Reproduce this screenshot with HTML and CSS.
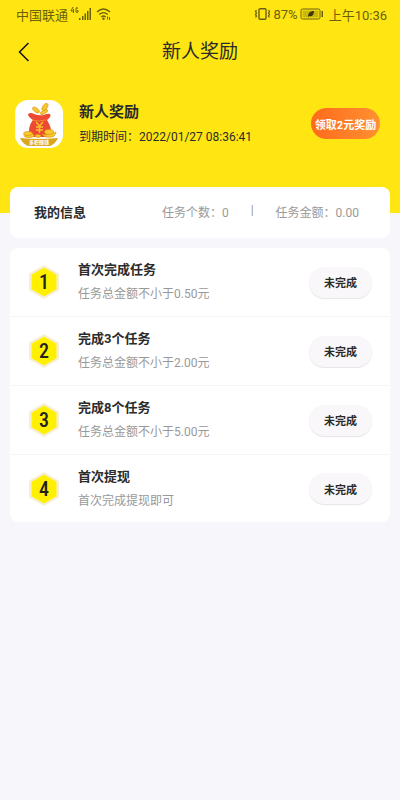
FILE: index.html
```
<!DOCTYPE html>
<html lang="zh-CN">
<head>
<meta charset="utf-8">
<meta name="viewport" content="width=device-width, initial-scale=1">
<title>新人奖励</title>
<link rel="stylesheet" href="styles.css">
</head>
<body>
<div class="status">
  <div class="status-side">
    <span>中国联通</span>
    <svg width="22" height="16" viewBox="0 0 22 16" aria-hidden="true">
      <g fill="none" stroke="currentColor" stroke-width="1"><path d="M3 1 1 5h3M3.500 3v4M8 2.500Q7 1 6 2v4q1 1 2 0V4.500H7"/></g>
      <path fill="currentColor" d="M9 12h1.500v2H9zM12 10h1.500v4H12zM14.500 7.500H16V14h-1.500zM17 5h1.500v9H17zM19.500 2H21v12h-1.500z"/>
    </svg>
    <svg class="wifi" width="16" height="14" viewBox="0 0 16 14" aria-hidden="true">
      <g fill="none" stroke="currentColor" stroke-width="1.300"><path d="M1 5Q7.500-1 14 5M3.200 7.600q4.300-4 8.600 0M5.300 10q2.200-2 4.400 0"/></g>
      <circle cx="7.500" cy="11.800" r="1.200" fill="currentColor"/><path d="M11.500 9.500v3M13.500 13v-3" stroke="currentColor" stroke-width="1"/>
    </svg>
  </div>
  <div class="status-side">
    <svg width="17" height="14" viewBox="0 0 17 14" aria-hidden="true">
      <rect x="5" y="1.700" width="7" height="10.600" rx="1" fill="none" stroke="currentColor" stroke-width="1.400"/>
      <path d="m2.500 3-1 1.500 1 1.500-1 1.500 1 1.500-1 1.500M14.500 3l1 1.500-1 1.500 1 1.500-1 1.500 1 1.500" fill="none" stroke="currentColor" stroke-width="1.300"/>
    </svg>
    <span>87%</span>
    <svg class="battery" width="24" height="12" viewBox="0 0 24 12" aria-hidden="true">
      <rect x="1" y="1" width="19" height="10" rx="1.500" fill="none" stroke="currentColor"/>
      <rect x="2.500" y="2.500" width="16" height="7" fill="currentColor" opacity=".35"/>
      <path d="M8 9c0-4 2-6 6-6 0 4-2 6-5 5L8 9.500z" fill="#3f3906"/><path d="M21.500 3h1.500v6h-1.500z" fill="currentColor"/>
    </svg>
    <span>上午10:36</span>
  </div>
</div>
<header class="nav">
  <button class="back" type="button" aria-label="返回">
    <svg width="12" height="20" viewBox="0 0 12 20" aria-hidden="true"><path d="M10.500 1 1.500 10l9 9" fill="none" stroke="currentColor" stroke-width="1.500"/></svg>
  </button>
  <h1>新人奖励</h1>
</header>
<main>
  <section class="profile">
    <svg class="logo" width="48" height="48" viewBox="0 0 48 48" aria-hidden="true">
      <rect width="48" height="48" rx="13" fill="#fff"/>
      <g fill="#f8c72e" stroke="#dc9a18" stroke-width=".7">
        <ellipse cx="21" cy="10" rx="4" ry="2" transform="rotate(38 21 10)"/>
        <ellipse cx="30" cy="7" rx="4" ry="2.200" transform="rotate(-55 30 7)"/>
        <ellipse cx="29" cy="12" rx="4" ry="1.800" transform="rotate(-30 29 12)"/>
      </g>
      <path d="M13 14q3-2 6 0 5 2 10 1 4-2 6-1 2 2-3 6 5 8 4 14-1 3-7 3H18q-5 0-4-6 0-6 4-11-5-3-5-6z" fill="#ec4a32"/>
      <path d="M17 20q7 2 14 0" fill="none" stroke="#f08a30" stroke-width="1"/>
      <path d="m21 22 3.500 4 3.500-4M24.500 26v7M21 27h7M21 30h7" fill="none" stroke="#fbc12c" stroke-width="1.400"/>
      <g fill="#fbc92e" stroke="#d99514" stroke-width=".7">
        <ellipse cx="14" cy="35.500" rx="5" ry="2"/><ellipse cx="13" cy="33.500" rx="4.500" ry="2"/>
        <path d="M27 34q4 2 7-1 4 2 7-1-1 5-5 5-6 1-9-3z"/><ellipse cx="34" cy="32" rx="4.500" ry="2.400"/><ellipse cx="23" cy="36" rx="3" ry="1.400"/>
      </g>
      <path d="M5 38q19 2 38 0-2 5-8 8H13q-6-3-8-8z" fill="#dda51e"/>
      <text class="logo-text" x="24" y="44" text-anchor="middle">多职赚钱</text>
    </svg>
    <div class="profile-text">
      <h2>新人奖励</h2>
      <p>到期时间：2022/01/27 08:36:41</p>
    </div>
    <button class="claim" type="button">领取2元奖励</button>
  </section>
  <section class="card info">
    <h2>我的信息</h2>
    <div class="totals"><span>任务个数：0</span><span>|</span><span>任务金额：0.00</span></div>
  </section>
  <ul class="card tasks">
    <li>
      <svg class="badge" width="32" height="36" viewBox="0 0 32 36" aria-hidden="true"><path class="hex-edge" d="m16 2 14 8v16l-14 8-14-8V10z"/><path class="hex" d="m16 3.500 12.500 7.200v14.600L16 32.500 3.500 25.300V10.700z"/><text x="16" y="25" text-anchor="middle">1</text></svg>
      <div class="task-text"><h3>首次完成任务</h3><p>任务总金额不小于0.50元</p></div>
      <button class="state" type="button">未完成</button>
    </li>
    <li>
      <svg class="badge" width="32" height="36" viewBox="0 0 32 36" aria-hidden="true"><path class="hex-edge" d="m16 2 14 8v16l-14 8-14-8V10z"/><path class="hex" d="m16 3.500 12.500 7.200v14.600L16 32.500 3.500 25.300V10.700z"/><text x="16" y="25" text-anchor="middle">2</text></svg>
      <div class="task-text"><h3>完成3个任务</h3><p>任务总金额不小于2.00元</p></div>
      <button class="state" type="button">未完成</button>
    </li>
    <li>
      <svg class="badge" width="32" height="36" viewBox="0 0 32 36" aria-hidden="true"><path class="hex-edge" d="m16 2 14 8v16l-14 8-14-8V10z"/><path class="hex" d="m16 3.500 12.500 7.200v14.600L16 32.500 3.500 25.300V10.700z"/><text x="16" y="25" text-anchor="middle">3</text></svg>
      <div class="task-text"><h3>完成8个任务</h3><p>任务总金额不小于5.00元</p></div>
      <button class="state" type="button">未完成</button>
    </li>
    <li>
      <svg class="badge" width="32" height="36" viewBox="0 0 32 36" aria-hidden="true"><path class="hex-edge" d="m16 2 14 8v16l-14 8-14-8V10z"/><path class="hex" d="m16 3.500 12.500 7.200v14.600L16 32.500 3.500 25.300V10.700z"/><text x="16" y="25" text-anchor="middle">4</text></svg>
      <div class="task-text"><h3>首次提现</h3><p>首次完成提现即可</p></div>
      <button class="state" type="button">未完成</button>
    </li>
  </ul>
</main>
</body>
</html>
```
FILE: styles.css
```
* { box-sizing: border-box; }
body {
  margin: 0;
  min-height: 100vh;
  background: linear-gradient(#ffe612, #ffe612) top / 100% 213px no-repeat #f7f7fb;
  color: #2b2b2b;
  font-family: Roboto, "Noto Sans CJK SC", sans-serif;
  font-size: 12px;
}
h1, h2, h3, p, ul { margin: 0; padding: 0; }
button { border: 0; padding: 0; font-family: inherit; color: inherit; }
svg { display: block; flex: none; }

.status {
  display: flex;
  justify-content: space-between;
  align-items: center;
  height: 28px;
  padding: 0 13px 0 16px;
  color: #6b600c;
  font-size: 13px;
}
.status-side { display: flex; align-items: center; gap: 2px; }
.wifi { margin-left: 2px; }
.battery { margin-right: 3px; }

.nav {
  display: grid;
  grid-template-columns: 40px 1fr 40px;
  align-items: center;
  height: 48px;
}
.back {
  display: flex;
  padding-left: 18px;
  background: none;
  color: #111;
}
.nav h1 {
  font-size: 19px;
  font-weight: 400;
  line-height: 28px;
  text-align: center;
}

.profile {
  display: flex;
  align-items: center;
  gap: 16px;
  padding: 22px 20px 38px 15px;
}
.logo-text { font-size: 5px; font-weight: 700; fill: #fff; }
.profile-text { flex: 1; padding-top: 2px; }
.profile-text h2 { font-size: 15px; line-height: 25px; }
.profile-text p { line-height: 24px; }
.claim {
  width: 69px;
  height: 31px;
  border-radius: 16px;
  background: linear-gradient(90deg, #ff6a1c, #ff9130);
  color: #fff;
  font-size: 11px;
  font-weight: 700;
  white-space: nowrap;
}

.card { margin: 0 10px 10px; border-radius: 8px; background: #fff; }
.info {
  display: flex;
  align-items: center;
  justify-content: space-between;
  height: 51px;
  padding: 0 31px 2px 24px;
}
.info h2 { font-size: 13px; }
.totals { display: flex; gap: 22px; color: #999; }

.tasks { list-style: none; }
.tasks li {
  display: flex;
  align-items: center;
  gap: 18px;
  height: 69px;
  padding: 0 18px;
  border-bottom: 1px solid #f5f5f5;
}
.tasks li:last-child { height: 67px; border-bottom: 0; }
.badge text {
  font-family: "Liberation Sans Narrow", "Roboto Condensed", Roboto, sans-serif;
  font-size: 20px;
  font-weight: 500;
  fill: #222;
}
.hex-edge { fill: #f6efd8; stroke: #f6efd8; stroke-width: 2; stroke-linejoin: round; }
.hex { fill: #fff000; }
.task-text { flex: 1; }
.task-text h3 { font-size: 13px; line-height: 24px; }
.task-text p { line-height: 24px; color: #999; }
.state {
  width: 63px;
  height: 31px;
  border-radius: 16px;
  background: #f9f7f9;
  box-shadow: 0 1px 1px #e6e4e6;
  font-size: 11px;
  font-weight: 700;
}
```
